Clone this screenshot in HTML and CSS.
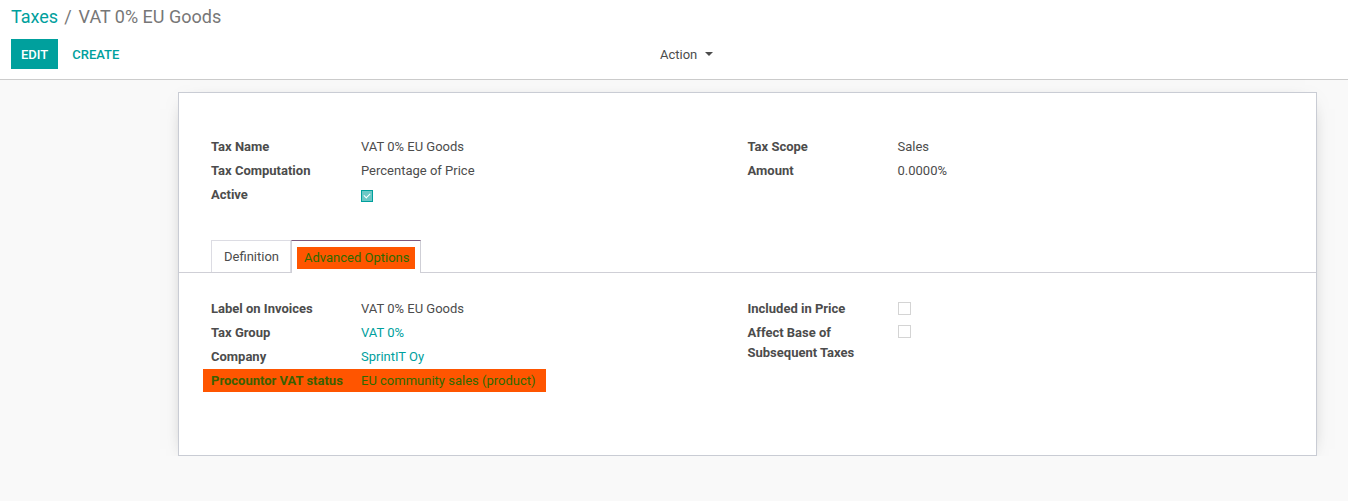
FILE: index.html
```html
<!DOCTYPE html>
<html lang="en">
<head>
    <meta charset="UTF-8">
    <title>Taxes / VAT 0% EU Goods</title>
    <link rel="stylesheet" href="styles.css">
</head>
<body>
    <div class="control-panel">
        <ol class="breadcrumb">
            <li><a href="#">Taxes</a></li>
            <li class="active">VAT 0% EU Goods</li>
        </ol>
        <div class="cp-buttons">
            <div class="main-buttons">
                <button class="btn btn-primary">Edit</button>
                <button class="btn btn-link">Create</button>
            </div>
            <div class="sidebar">
                <button class="btn btn-dropdown">Action <span class="caret"></span></button>
            </div>
        </div>
    </div>

    <div class="form-view">
        <div class="sheet">
            <div class="groups">
                <div class="group">
                    <div class="row"><div class="label">Tax Name</div><div class="value">VAT 0% EU Goods</div></div>
                    <div class="row"><div class="label">Tax Computation</div><div class="value">Percentage of Price</div></div>
                    <div class="row"><div class="label">Active</div><div class="value"><span class="check checked"></span></div></div>
                </div>
                <div class="group">
                    <div class="row"><div class="label">Tax Scope</div><div class="value">Sales</div></div>
                    <div class="row"><div class="label">Amount</div><div class="value">0.0000%</div></div>
                </div>
            </div>

            <ul class="tabs">
                <li class="tab"><a href="#">Definition</a></li>
                <li class="tab active"><a href="#"><span class="hl">Advanced Options</span></a></li>
            </ul>

            <div class="groups tab-pane">
                <div class="group">
                    <div class="row"><div class="label">Label on Invoices</div><div class="value">VAT 0% EU Goods</div></div>
                    <div class="row"><div class="label">Tax Group</div><div class="value"><a href="#">VAT 0%</a></div></div>
                    <div class="row"><div class="label">Company</div><div class="value"><a href="#">SprintIT Oy</a></div></div>
                    <div class="row marked"><div class="label">Procountor VAT status</div><div class="value">EU community sales (product)</div></div>
                </div>
                <div class="group">
                    <div class="row"><div class="label">Included in Price</div><div class="value"><span class="check"></span></div></div>
                    <div class="row"><div class="label narrow">Affect Base of Subsequent Taxes</div><div class="value"><span class="check"></span></div></div>
                </div>
            </div>
        </div>
    </div>
</body>
</html>
```

FILE: styles.css
```css
body {
    margin: 0;
    font-family: Roboto, "Liberation Sans", sans-serif;
    font-size: 13px;
    color: #4c4c4c;
    background-color: #f9f9f9;
}

a {
    color: #00a09d;
    text-decoration: none;
}

.control-panel {
    background-color: white;
    border-bottom: 1px solid #cccccc;
    padding: 5px 11px 10px;
}

.breadcrumb {
    list-style: none;
    margin: 0;
    padding: 0;
    display: flex;
    font-size: 18px;
    line-height: 24px;
}

.breadcrumb li.active {
    color: #777777;
}

.breadcrumb li + li::before {
    content: '/';
    padding: 0 7px 0 6px;
    color: #777777;
}

.cp-buttons {
    display: flex;
    margin-top: 10px;
    height: 30px;
}

.main-buttons {
    display: flex;
    width: 630px;
}

.btn {
    font-family: inherit;
    font-size: 13px;
    border: none;
    background: none;
    height: 30px;
    padding: 0 10px;
    cursor: pointer;
}

.btn-primary {
    background-color: #00a09d;
    color: white;
    font-weight: 500;
    text-transform: uppercase;
}

.btn-link {
    color: #00a09d;
    font-weight: 500;
    text-transform: uppercase;
    margin-left: 4px;
}

.btn-dropdown {
    color: #4c4c4c;
    padding: 0 8px 0 8px;
    margin-left: 11px;
}

.caret {
    display: inline-block;
    width: 0;
    height: 0;
    margin-left: 4px;
    vertical-align: 3px;
    border-top: 4px solid #4c4c4c;
    border-left: 4px solid transparent;
    border-right: 4px solid transparent;
}

.form-view {
    padding: 12px 31px 0 178px;
}

.sheet {
    background-color: white;
    border: 1px solid #c9ccd4;
    box-shadow: 0 5px 20px -12px rgba(0, 0, 0, 0.6);
    padding: 42px 32px 63px;
}

.groups {
    display: grid;
    grid-template-columns: 1fr 1fr;
}

.row {
    display: flex;
    min-height: 24px;
    align-items: center;
    line-height: 20px;
}

.label {
    width: 150px;
    font-weight: bold;
    flex-shrink: 0;
}

.label.narrow {
    width: 120px;
    margin-right: 30px;
    align-self: flex-start;
    padding-top: 2px;
}

.value {
    color: #4c4c4c;
}

.row .narrow + .value {
    align-self: flex-start;
    padding-top: 1px;
}

.row.marked {
    width: fit-content;
    margin-left: -8px;
    padding: 0 10px 0 8px;
    min-height: 23px;
    background-color: #ff5500;
    color: #3b6000;
}

.row.marked .value {
    color: #2e6a00;
}

.check {
    display: inline-block;
    width: 11px;
    height: 11px;
    border: 1px solid #d4d4d4;
    vertical-align: middle;
    position: relative;
    top: -1px;
}

.check.checked {
    width: 10px;
    height: 10px;
    top: 0;
    background-color: #6cc8c6;
    border-color: #00a09d;
}

.check.checked::after {
    content: '';
    position: absolute;
    left: 3px;
    top: 1px;
    width: 3px;
    height: 5px;
    border-right: 1px solid white;
    border-bottom: 1px solid white;
    transform: rotate(45deg);
}

.tabs {
    list-style: none;
    display: flex;
    margin: 33px -32px 24px;
    padding: 0 0 0 32px;
    border-bottom: 1px solid #cfcfd6;
}

.tab {
    margin-bottom: -1px;
}

.tab a {
    display: block;
    height: 31px;
    line-height: 31px;
    padding: 0 11px 0 12px;
    border: 1px solid #dcdce3;
    border-bottom: none;
    color: #4c4c4c;
    background-color: white;
}

.tab + .tab a {
    border-left: none;
}

.tab.active a {
    height: 32px;
    border-top-color: #7c5a7f;
    border-left: 1px solid #cfcfd6;
    border-right: 1px solid #cfcfd6;
    padding: 0 5px 0 5px;
}

.hl {
    display: inline-block;
    margin-top: 6px;
    height: 22px;
    line-height: 22px;
    padding: 0 6px 0 7px;
    background-color: #ff5500;
    color: #2e6a00;
    vertical-align: top;
}
```
